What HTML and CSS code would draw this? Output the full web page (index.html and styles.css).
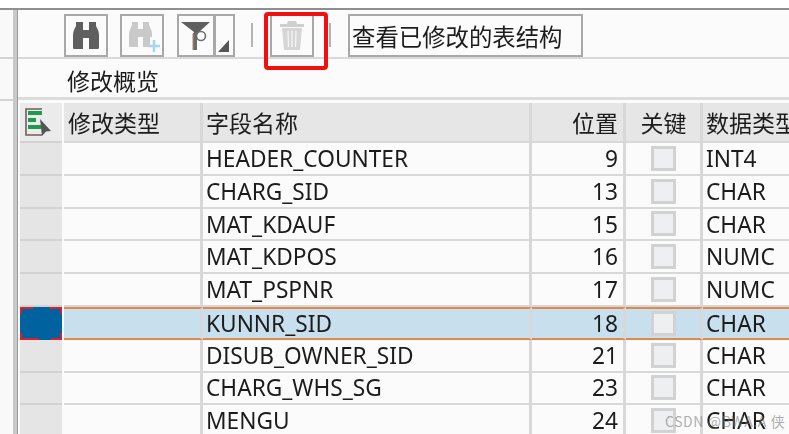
FILE: index.html
```html
<!DOCTYPE html>
<html lang="zh">
<head>
<meta charset="utf-8">
<title>修改概览</title>
<link rel="stylesheet" href="styles.css">
</head>
<body>
<div class="page">
  <div class="side">
    <div class="side-a"></div>
    <div class="side-b"></div>
    <div class="side-c"></div>
  </div>
  <div class="splitter"></div>
  <main class="main">
    <div class="toolbar">
      <button class="tool tool-find">
        <svg width="26" height="28" viewBox="0 0 26 28"><path fill="#5f5f5f" d="M3 0h7v27H1c-1 0-1-1-1-2V13c0-4 2-7 3-9zM23 0h-7v27h9c1 0 1-1 1-2V13c0-4-2-7-3-9z"/><path fill="#5f5f5f" d="M9 8h8v8H9z"/></svg>
      </button>
      <button class="tool tool-find-more">
        <svg class="icon-offset" width="32" height="34" viewBox="0 0 32 34"><path fill="#c9c9c9" d="M3 2h6v25H1c-1 0-1-1-1-2V14c0-4 2-6 3-9zM20 2h-6v25h7V17h2v-3c0-4-2-6-3-9z"/><path fill="#c9c9c9" d="M8 9h7v8H8z"/><path fill="none" stroke="#a9d6ee" stroke-width="2.600" d="M25 20v12M19 26h12"/></svg>
      </button>
      <div class="split-tool">
        <button class="tool tool-filter">
          <svg width="30" height="30" viewBox="0 0 30 30"><path fill="#5f5f5f" d="M0 1h29L18 11l-2 3h-3v-3z"/><path fill="#6b6b6b" d="M12 12h4v17h-4z"/><path fill="#b08a5f" d="M11.500 13h1v16h-1z"/><circle cx="20" cy="15" r="4.500" fill="none" stroke="#707070" stroke-width="1.600"/></svg>
        </button>
        <button class="tool tool-arrow">
          <svg class="corner" width="12" height="12" viewBox="0 0 12 12"><path fill="#555" d="M11 0v12H0z"/></svg>
        </button>
      </div>
      <span class="sep sep-a"></span>
      <button class="tool tool-trash">
        <svg width="26" height="31" viewBox="0 0 26 31"><path fill="#cfcfcf" d="M9 1h8l1 3h7v3H1V4h7z"/><path fill="#d6d6d6" d="M3 8h20l-2 22H5z"/><path stroke="#f3f3f3" stroke-width="1.300" d="M9 11l.5 16M13 11v16M17 11l-.5 16"/></svg>
      </button>
      <span class="sep sep-b"></span>
      <button class="tool tool-text">查看已修改的表结构</button>
    </div>
    <div class="title-row">修改概览</div>
    <div class="table">
      <div class="tr head">
        <div class="sel corner-sel">
          <svg width="28" height="30" viewBox="0 0 28 30"><path fill="none" stroke="#6d5f5c" stroke-width="1.600" d="M18 2H2v26h16"/><path fill="#1f9a4d" d="M4 4h14v4H4zM4 11h8v4H4zM4 18h13v4H4z"/><path fill="#555" d="M16 12l11 12-5 .5L18 29z"/></svg>
        </div>
        <div class="td">修改类型</div>
        <div class="td">字段名称</div>
        <div class="td num">位置</div>
        <div class="td ctr">关键</div>
        <div class="td">数据类型</div>
      </div>
      <div class="tr"><div class="sel"></div><div class="td"></div><div class="td">HEADER_COUNTER</div><div class="td num">9</div><div class="td ctr"><span class="check"></span></div><div class="td">INT4</div></div>
      <div class="tr"><div class="sel"></div><div class="td"></div><div class="td">CHARG_SID</div><div class="td num">13</div><div class="td ctr"><span class="check"></span></div><div class="td">CHAR</div></div>
      <div class="tr"><div class="sel"></div><div class="td"></div><div class="td">MAT_KDAUF</div><div class="td num">15</div><div class="td ctr"><span class="check"></span></div><div class="td">CHAR</div></div>
      <div class="tr"><div class="sel"></div><div class="td"></div><div class="td">MAT_KDPOS</div><div class="td num">16</div><div class="td ctr"><span class="check"></span></div><div class="td">NUMC</div></div>
      <div class="tr"><div class="sel"></div><div class="td"></div><div class="td">MAT_PSPNR</div><div class="td num">17</div><div class="td ctr"><span class="check"></span></div><div class="td">NUMC</div></div>
      <div class="tr selected"><div class="sel"></div><div class="td"></div><div class="td">KUNNR_SID</div><div class="td num">18</div><div class="td ctr"><span class="check"></span></div><div class="td">CHAR</div></div>
      <div class="tr"><div class="sel"></div><div class="td"></div><div class="td">DISUB_OWNER_SID</div><div class="td num">21</div><div class="td ctr"><span class="check"></span></div><div class="td">CHAR</div></div>
      <div class="tr"><div class="sel"></div><div class="td"></div><div class="td">CHARG_WHS_SG</div><div class="td num">23</div><div class="td ctr"><span class="check"></span></div><div class="td">CHAR</div></div>
      <div class="tr"><div class="sel"></div><div class="td"></div><div class="td">MENGU</div><div class="td num">24</div><div class="td ctr"><span class="check"></span></div><div class="td">CHAR</div></div>
    </div>
  </main>
</div>
<div class="annotation"></div>
<div class="watermark">CSDN @BWA.A 侠</div>
</body>
</html>
```

FILE: styles.css
```css
* { box-sizing: border-box; }
html, body { margin: 0; padding: 0; width: 789px; height: 434px; overflow: hidden; background: #fff; }
body { position: relative; font-family: "Noto Sans", "Noto Sans CJK SC", sans-serif; color: #1c1c1c; font-size: 22.700px; }
.page { display: flex; height: 426px; margin-top: 8px; border-top: 2px solid #8f8f8f; filter: blur(0.45px); overflow: hidden; }
.side { width: 13px; background: #f9f9f9; display: flex; flex-direction: column; }
.side-a { height: 49px; border-bottom: 2px solid #d4d4d4; }
.side-b { height: 42px; border-bottom: 2px solid #d4d4d4; }
.side-c { flex: 1; }
.splitter { width: 5px; background: #c9c9c9; border-right: 1px solid #9a9a9a; }
.main { flex: 1; min-width: 0; background: #fbfbfb; display: flex; flex-direction: column; }
.toolbar { height: 51px; padding: 4px 0 0 46px; border-bottom: 2px solid #d9d9d9; display: flex; align-items: flex-start; }
.tool { height: 43px; padding: 0; margin: 0; border: 2px solid #a8a8a8; background: #fbfbfb; display: flex; align-items: center; justify-content: center; font: inherit; color: inherit; }
.tool-find { width: 44px; margin-right: 12px; }
.tool-find-more { width: 44px; margin-right: 13px; }
.icon-offset { margin: 2px 0 0 5px; }
.split-tool { display: flex; }
.tool-filter { width: 38px; }
.tool-arrow { width: 21px; border-left-width: 2px; margin-left: -1px; position: relative; }
.corner { position: absolute; right: 3px; bottom: 3px; }
.sep { width: 2px; height: 24px; margin-top: 9px; background: #b4b4b4; }
.sep-a { margin-left: 16px; margin-right: 17px; }
.tool-trash { width: 44px; }
.sep-b { margin-left: 15px; margin-right: 17px; }
.tool-text { width: 235px; justify-content: flex-start; padding-left: 2px; font-size: 23.400px; font-family: "Noto Sans CJK SC", sans-serif; }
.title-row { height: 41px; padding-left: 49px; border-bottom: 3px solid #dcdcdc; font-family: "Noto Sans CJK SC", sans-serif; font-size: 23px; line-height: 42px; }
.table { padding: 3px 0 0 2px; flex: 1; }
.tr { display: grid; grid-template-columns: 44px 139px 329px 94px 77px 90px; height: 32.800px; align-items: stretch; }
.tr .td { border-right: 3px solid #d8d8d8; border-bottom: 2px solid #d8d8d8; padding: 0 3px; display: flex; align-items: center; white-space: nowrap; overflow: hidden; }
.tr .td:last-child { border-right: 0; }
.tr .num { justify-content: flex-end; padding-right: 5px; }
.tr .ctr { justify-content: center; }
.sel { background: #e5e5e5; border-bottom: 2px solid #d2d2d2; margin-right: 2px; }
.tr.head { height: 40px; }
.head .td { background: #e6e6e6; font-family: "Noto Sans CJK SC", sans-serif; font-size: 23px; padding-left: 4px; }
.head .td:nth-child(3) { padding-left: 3px; }
.head .td:last-child { padding-left: 3px; }
.corner-sel { background: #ebebeb; display: flex; align-items: center; justify-content: center; padding: 0 6px 0 0; }
.check { width: 25px; height: 25px; background: #edeff1; border: 3px solid #d2d2d2; }
.tr.selected .td { background: #c8e0ee; border-top: 2px solid #e0894d; border-bottom: 2px solid #e0894d; }
.selected .sel {
  border: 0;
  background-color: #0063a0;
  background-image:
    linear-gradient(#d81f2a, #d81f2a), linear-gradient(#d81f2a, #d81f2a),
    linear-gradient(#d81f2a, #d81f2a), linear-gradient(#d81f2a, #d81f2a),
    linear-gradient(#d81f2a, #d81f2a), linear-gradient(#d81f2a, #d81f2a),
    linear-gradient(#d81f2a, #d81f2a), linear-gradient(#d81f2a, #d81f2a);
  background-repeat: no-repeat;
  background-size: 13px 2px, 13px 2px, 19px 2px, 11px 2px, 2px 7px, 2px 7px, 2px 7px, 2px 7px;
  background-position: left top, right top, left bottom, right bottom, left top, right top, left bottom, right bottom;
}
.annotation { position: absolute; left: 264px; top: 12px; width: 64px; height: 58px; border: 4px solid #f20f0f; border-radius: 4px; }
.watermark { position: absolute; left: 665px; top: 411px; font-size: 14px; letter-spacing: .6px; color: rgba(120,120,120,.6); white-space: nowrap; font-family: "Noto Sans CJK SC", sans-serif; }
```
